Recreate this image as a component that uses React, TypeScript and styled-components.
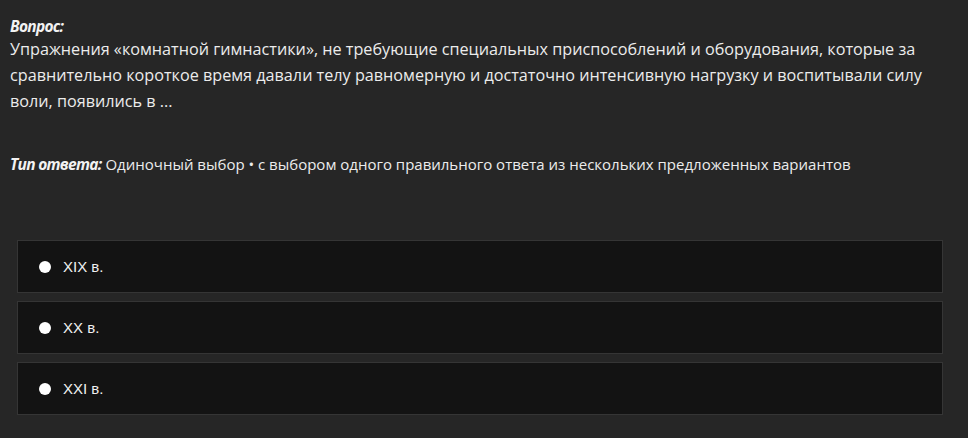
import React from "react";
import styled, { createGlobalStyle } from "styled-components";

const GlobalStyle = createGlobalStyle`
  html, body {
    margin: 0;
    padding: 0;
    background: #262626;
  }
  body {
    font-family: "Open Sans", "Noto Sans", sans-serif;
    color: #ececec;
  }
`;

const options = ["XIX в.", "XX в.", "XXI в."];

export default function App() {
  return (
    <>
      <GlobalStyle />
      <Page>
        <Label>Вопрос:</Label>
        <Question>
          Упражнения «комнатной гимнастики», не требующие специальных
          приспособлений и оборудования, которые за сравнительно короткое время
          давали телу равномерную и достаточно интенсивную нагрузку и
          воспитывали силу воли, появились в ...
        </Question>
        <AnswerType>
          <Label as="span">Тип ответа:</Label> Одиночный выбор • с выбором
          одного правильного ответа из нескольких предложенных вариантов
        </AnswerType>
        <Options>
          {options.map((o) => (
            <Option key={o}>
              <Radio />
              <OptionText>{o}</OptionText>
            </Option>
          ))}
        </Options>
      </Page>
    </>
  );
}

const Page = styled.div`
  width: 968px;
  height: 438px;
  box-sizing: border-box;
  padding: 16px 10px 0 10px;
`;

const Label = styled.div`
  font-weight: 700;
  font-style: italic;
  font-size: 15.5px;
  line-height: 20px;
  letter-spacing: -0.7px;
  color: #f2f2f2;
`;

const Question = styled.p`
  margin: 0;
  font-size: 16.2px;
  line-height: 26px;
  width: 925px;
`;

const AnswerType = styled.p`
  margin: 40px 0 0;
  font-size: 15px;
  line-height: 20px;
`;

const Options = styled.div`
  display: flex;
  flex-direction: column;
  gap: 8px;
  margin: 66px 15px 0 7px;
`;

const Option = styled.label`
  display: flex;
  align-items: center;
  height: 53px;
  box-sizing: border-box;
  padding-left: 21px;
  background: #131313;
  border: 1px solid #353535;
`;

const Radio = styled.span`
  width: 12px;
  height: 12px;
  border-radius: 50%;
  background: #fff;
  margin-right: 12px;
  flex-shrink: 0;
`;

const OptionText = styled.span`
  font-family: "Liberation Sans", Arial, sans-serif;
  font-size: 15px;
  color: #f0f0f0;
`;
